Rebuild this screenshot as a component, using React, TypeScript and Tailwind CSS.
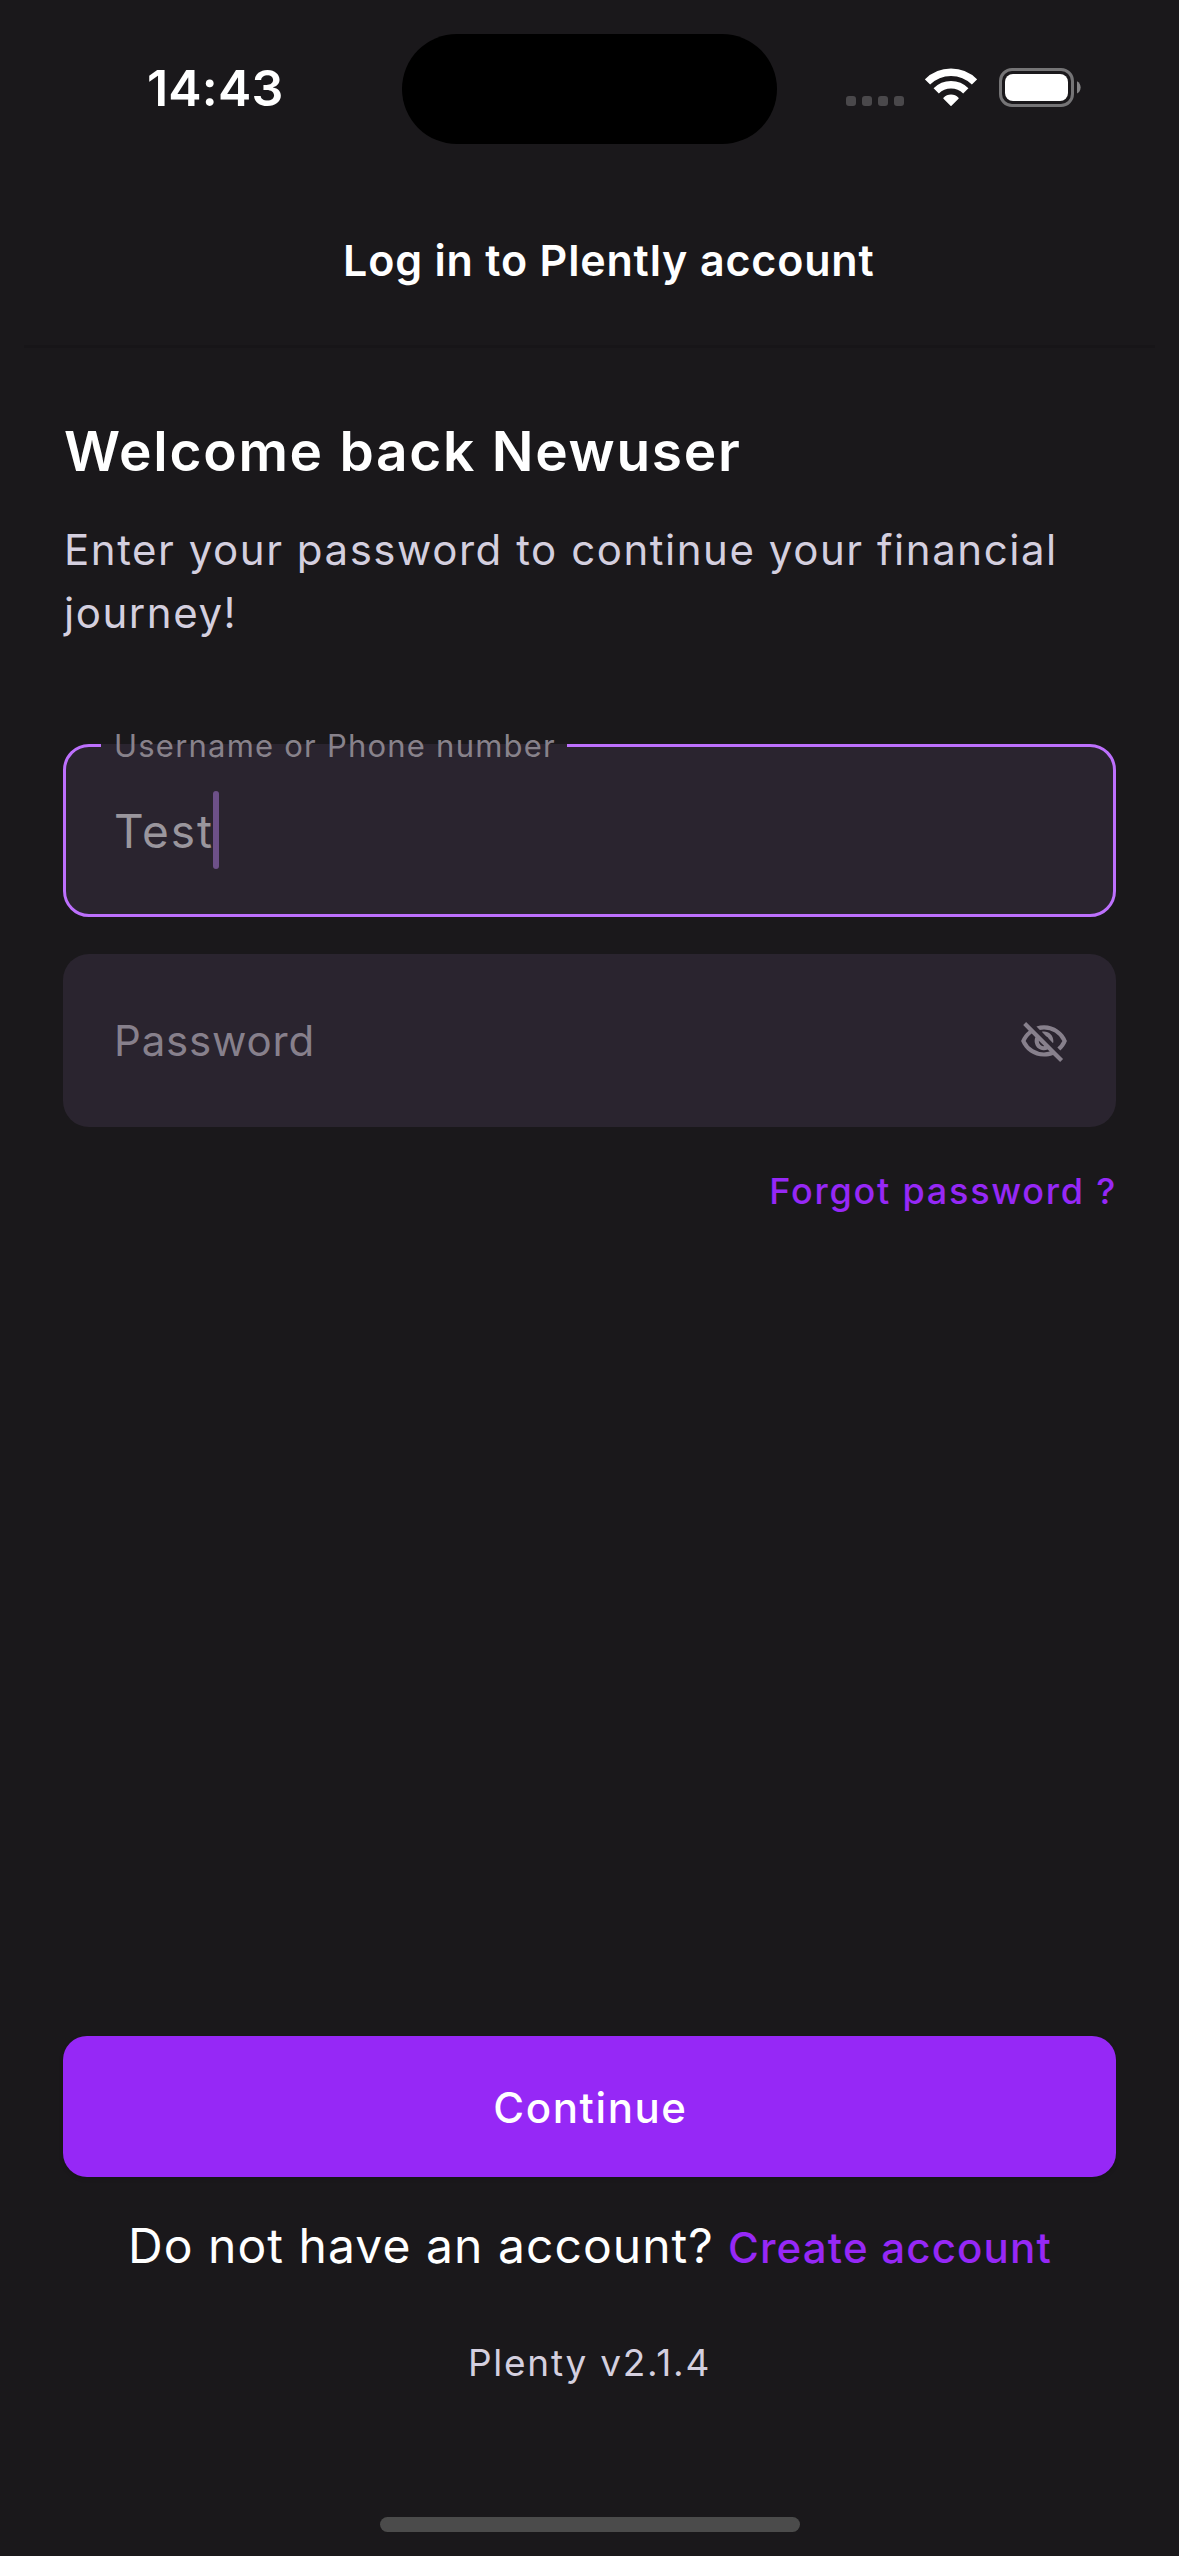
import { MdOutlineVisibilityOff } from "react-icons/md";

function WifiIcon() {
  return (
    <svg width="52" height="38" viewBox="0 0 52 38" fill="none">
      <path d="M2.5 14A33.2 33.2 0 0 1 49.5 14" stroke="#fff" strokeWidth="7.4" />
      <path d="M11.2 22.9A20.8 20.8 0 0 1 40.8 22.9" stroke="#fff" strokeWidth="7.4" />
      <path
        d="M26 37.2L19 30.2A9.9 9.9 0 0 1 33 30.2Z"
        fill="#fff"
        stroke="#fff"
        strokeWidth="1.4"
        strokeLinejoin="round"
      />
    </svg>
  );
}

function BatteryIcon() {
  return (
    <div className="flex items-center">
      <div className="flex h-[39px] w-[75px] rounded-[13px] border-[3px] border-[#757476] p-[3px]">
        <div className="flex-1 rounded-[8px] bg-white" />
      </div>
      <svg width="7" height="13" viewBox="0 0 7 13" className="-mr-[7px]">
        <path d="M3 0.3C5.2 1.4 6.6 3.7 6.6 6.4S5.2 11.4 3 12.5Z" fill="#858486" />
      </svg>
    </div>
  );
}

function StatusBar() {
  return (
    <div className="flex h-[178px] items-start">
      <div className="w-[402px] pt-[63px] pl-[147px] text-[50px] leading-[50px] font-semibold tracking-[0.2px]">
        14:43
      </div>
      <div className="mt-[34px] h-[110px] w-[375px] rounded-full bg-black" />
      <div className="flex w-[402px] pt-[68px] pl-[69px]">
        <div className="flex gap-[6px] pt-[28px]">
          {[0, 1, 2, 3].map((dot) => (
            <div key={dot} className="size-[10px] rounded-[3px] bg-[#4a484b]" />
          ))}
        </div>
        <div className="ml-[21px]">
          <WifiIcon />
        </div>
        <div className="ml-[22px]">
          <BatteryIcon />
        </div>
      </div>
    </div>
  );
}

export default function App() {
  return (
    <div className="flex h-[2556px] w-[1179px] flex-col overflow-hidden bg-[#1a181b] font-['Inter',sans-serif] text-white">
      <StatusBar />

      <header className="mx-[24px] h-[170px] border-b-[3px] border-[#171518] pt-[56px] pl-[319px]">
        <h1 className="text-[43px] leading-[52px] font-semibold tracking-[0.82px] whitespace-nowrap">
          Log in to Plently account
        </h1>
      </header>

      <main className="flex flex-1 flex-col px-[63px] pt-[70px]">
        <h2 className="pl-px text-[55px] leading-[66px] font-semibold tracking-[1.72px]">
          Welcome back Newuser
        </h2>
        <p className="mt-[34px] pl-px text-[42px] leading-[63px] tracking-[1.54px] text-[#d4cfdf]">
          Enter your password to continue your financial
          <br />
          journey!
        </p>

        <div className="relative mt-[100px] flex h-[173px] items-center rounded-[26px] border-[3px] border-[#bd70fd] bg-[#2a242f] pl-[48px]">
          <div className="absolute -top-[3px] left-[35px] h-[3px] w-[466px] bg-[#2a242f]" />
          <label className="absolute -top-[20px] left-[48px] text-[31px] leading-[38px] tracking-[1.22px] whitespace-nowrap text-[#88828b]">
            Username or Phone number
          </label>
          <span className="pt-px text-[46px] leading-[56px] tracking-[1.9px] text-[#9a969d]">Test</span>
          <span className="absolute top-[44px] left-[147px] h-[78px] w-[6px] rounded-full bg-[#6d5088]" />
        </div>

        <div className="mt-[37px] flex h-[173px] items-center justify-between rounded-[26px] bg-[#2a242f] pr-[47px] pl-[51px] text-[#87808c]">
          <span className="pt-px text-[42px] leading-[52px] tracking-[0.83px]">Password</span>
          <MdOutlineVisibilityOff className="mt-[2px] size-[50px]" />
        </div>

        <a className="-mr-px mt-[42px] self-end text-[36px] leading-[44px] font-medium tracking-[1.77px] text-[#9628f6]">
          Forgot password ?
        </a>

        <button className="mt-auto h-[141px] rounded-[24px] bg-[#9628f6] pt-[2px] pl-[2px] text-[42px] leading-[52px] font-medium tracking-[1.6px] shadow-[0_2px_4px_rgba(0,0,0,0.15)]">
          Continue
        </button>

        <div className="mt-[39px] flex items-baseline justify-center gap-[14px] pl-px whitespace-nowrap">
          <span className="text-[48px] leading-[60px] tracking-[1.05px]">Do not have an account?</span>
          <a className="text-[42px] leading-[52px] font-medium tracking-[1.19px] text-[#9628f6]">
            Create account
          </a>
        </div>

        <p className="mt-[65px] text-center text-[37px] leading-[44px] tracking-[1.75px] text-[#d4cfdf]">
          Plenty v2.1.4
        </p>

        <div className="mt-[132px] mb-[24px] h-[15px] w-[420px] self-center rounded-full bg-[#4b4b4b]" />
      </main>
    </div>
  );
}
